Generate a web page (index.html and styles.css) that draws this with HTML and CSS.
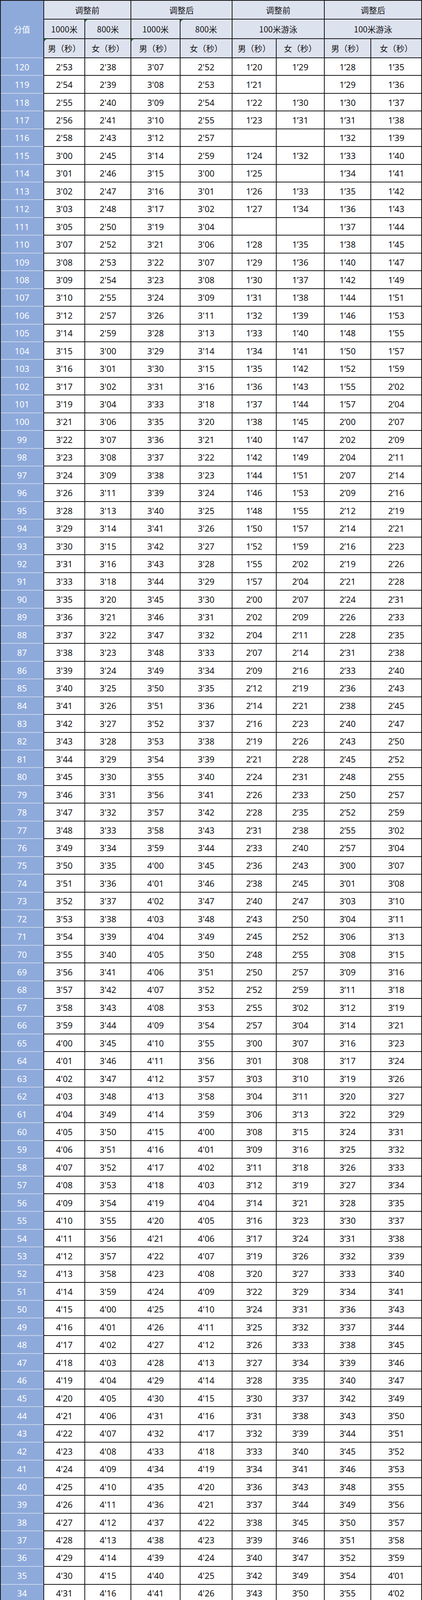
FILE: index.html
```html
<!DOCTYPE html>
<html lang="zh-CN">
<head>
<meta charset="utf-8">
<title>分值对照表</title>
<link rel="stylesheet" href="styles.css">
</head>
<body>
<div class="sheet">
<div class="corner">分值</div>
<div class="h s2">调整前</div><div class="h s2">调整后</div><div class="h s2">调整前</div><div class="h s2">调整后</div>
<div class="h">1000米</div><div class="h tri">800米</div><div class="h">1000米</div><div class="h tri">800米</div><div class="h s2">100米游泳</div><div class="h s2">100米游泳</div>
<div class="h tri">男（秒）</div><div class="h">女（秒）</div><div class="h tri">男（秒）</div><div class="h">女（秒）</div><div class="h">男（秒）</div><div class="h">女（秒）</div><div class="h">男（秒）</div><div class="h">女（秒）</div>
<div class="n">120</div><div>2'53</div><div>2'38</div><div>3'07</div><div>2'52</div><div>1’20</div><div>1’29</div><div>1’28</div><div>1’35</div>
<div class="n">119</div><div>2'54</div><div>2'39</div><div>3'08</div><div>2'53</div><div>1’21</div><div></div><div>1’29</div><div>1’36</div>
<div class="n">118</div><div>2'55</div><div>2'40</div><div>3'09</div><div>2'54</div><div>1’22</div><div>1’30</div><div>1’30</div><div>1’37</div>
<div class="n">117</div><div>2'56</div><div>2'41</div><div>3'10</div><div>2'55</div><div>1’23</div><div>1’31</div><div>1’31</div><div>1’38</div>
<div class="n">116</div><div>2'58</div><div>2'43</div><div>3'12</div><div>2'57</div><div></div><div></div><div>1’32</div><div>1’39</div>
<div class="n">115</div><div>3'00</div><div>2'45</div><div>3'14</div><div>2'59</div><div>1’24</div><div>1’32</div><div>1’33</div><div>1’40</div>
<div class="n">114</div><div>3'01</div><div>2'46</div><div>3'15</div><div>3'00</div><div>1’25</div><div></div><div>1’34</div><div>1’41</div>
<div class="n">113</div><div>3'02</div><div>2'47</div><div>3'16</div><div>3'01</div><div>1’26</div><div>1’33</div><div>1’35</div><div>1’42</div>
<div class="n">112</div><div>3'03</div><div>2'48</div><div>3'17</div><div>3'02</div><div>1’27</div><div>1’34</div><div>1’36</div><div>1’43</div>
<div class="n">111</div><div>3'05</div><div>2'50</div><div>3'19</div><div>3'04</div><div></div><div></div><div>1’37</div><div>1’44</div>
<div class="n">110</div><div>3'07</div><div>2'52</div><div>3'21</div><div>3'06</div><div>1’28</div><div>1’35</div><div>1’38</div><div>1’45</div>
<div class="n">109</div><div>3'08</div><div>2'53</div><div>3'22</div><div>3'07</div><div>1’29</div><div>1’36</div><div>1’40</div><div>1’47</div>
<div class="n">108</div><div>3'09</div><div>2'54</div><div>3'23</div><div>3'08</div><div>1’30</div><div>1’37</div><div>1’42</div><div>1’49</div>
<div class="n">107</div><div>3'10</div><div>2'55</div><div>3'24</div><div>3'09</div><div>1’31</div><div>1’38</div><div>1’44</div><div>1’51</div>
<div class="n">106</div><div>3'12</div><div>2'57</div><div>3'26</div><div>3'11</div><div>1’32</div><div>1’39</div><div>1’46</div><div>1’53</div>
<div class="n">105</div><div>3'14</div><div>2'59</div><div>3'28</div><div>3'13</div><div>1’33</div><div>1’40</div><div>1’48</div><div>1’55</div>
<div class="n">104</div><div>3'15</div><div>3'00</div><div>3'29</div><div>3'14</div><div>1’34</div><div>1’41</div><div>1’50</div><div>1’57</div>
<div class="n">103</div><div>3'16</div><div>3'01</div><div>3'30</div><div>3'15</div><div>1’35</div><div>1’42</div><div>1’52</div><div>1’59</div>
<div class="n">102</div><div>3'17</div><div>3'02</div><div>3'31</div><div>3'16</div><div>1’36</div><div>1’43</div><div>1’55</div><div>2’02</div>
<div class="n">101</div><div>3'19</div><div>3'04</div><div>3'33</div><div>3'18</div><div>1’37</div><div>1’44</div><div>1’57</div><div>2’04</div>
<div class="n">100</div><div>3'21</div><div>3'06</div><div>3'35</div><div>3'20</div><div>1’38</div><div>1’45</div><div>2’00</div><div>2’07</div>
<div class="n">99</div><div>3'22</div><div>3'07</div><div>3'36</div><div>3'21</div><div>1’40</div><div>1’47</div><div>2’02</div><div>2’09</div>
<div class="n">98</div><div>3'23</div><div>3'08</div><div>3'37</div><div>3'22</div><div>1’42</div><div>1’49</div><div>2’04</div><div>2’11</div>
<div class="n">97</div><div>3'24</div><div>3'09</div><div>3'38</div><div>3'23</div><div>1’44</div><div>1’51</div><div>2’07</div><div>2’14</div>
<div class="n">96</div><div>3'26</div><div>3'11</div><div>3'39</div><div>3'24</div><div>1’46</div><div>1’53</div><div>2’09</div><div>2’16</div>
<div class="n">95</div><div>3'28</div><div>3'13</div><div>3'40</div><div>3'25</div><div>1’48</div><div>1’55</div><div>2’12</div><div>2’19</div>
<div class="n">94</div><div>3'29</div><div>3'14</div><div>3'41</div><div>3'26</div><div>1’50</div><div>1’57</div><div>2’14</div><div>2’21</div>
<div class="n">93</div><div>3'30</div><div>3'15</div><div>3'42</div><div>3'27</div><div>1’52</div><div>1’59</div><div>2’16</div><div>2’23</div>
<div class="n">92</div><div>3'31</div><div>3'16</div><div>3'43</div><div>3'28</div><div>1’55</div><div>2’02</div><div>2’19</div><div>2’26</div>
<div class="n">91</div><div>3'33</div><div>3'18</div><div>3'44</div><div>3'29</div><div>1’57</div><div>2’04</div><div>2’21</div><div>2’28</div>
<div class="n">90</div><div>3'35</div><div>3'20</div><div>3'45</div><div>3'30</div><div>2’00</div><div>2’07</div><div>2’24</div><div>2’31</div>
<div class="n">89</div><div>3'36</div><div>3'21</div><div>3'46</div><div>3'31</div><div>2’02</div><div>2’09</div><div>2’26</div><div>2’33</div>
<div class="n">88</div><div>3'37</div><div>3'22</div><div>3'47</div><div>3'32</div><div>2’04</div><div>2’11</div><div>2’28</div><div>2’35</div>
<div class="n">87</div><div>3'38</div><div>3'23</div><div>3'48</div><div>3'33</div><div>2’07</div><div>2’14</div><div>2’31</div><div>2’38</div>
<div class="n">86</div><div>3'39</div><div>3'24</div><div>3'49</div><div>3'34</div><div>2’09</div><div>2’16</div><div>2’33</div><div>2’40</div>
<div class="n">85</div><div>3'40</div><div>3'25</div><div>3'50</div><div>3'35</div><div>2’12</div><div>2’19</div><div>2’36</div><div>2’43</div>
<div class="n">84</div><div>3'41</div><div>3'26</div><div>3'51</div><div>3'36</div><div>2’14</div><div>2’21</div><div>2’38</div><div>2’45</div>
<div class="n">83</div><div>3'42</div><div>3'27</div><div>3'52</div><div>3'37</div><div>2’16</div><div>2’23</div><div>2’40</div><div>2’47</div>
<div class="n">82</div><div>3'43</div><div>3'28</div><div>3'53</div><div>3'38</div><div>2’19</div><div>2’26</div><div>2’43</div><div>2’50</div>
<div class="n">81</div><div>3'44</div><div>3'29</div><div>3'54</div><div>3'39</div><div>2’21</div><div>2’28</div><div>2’45</div><div>2’52</div>
<div class="n">80</div><div>3'45</div><div>3'30</div><div>3'55</div><div>3'40</div><div>2’24</div><div>2’31</div><div>2’48</div><div>2’55</div>
<div class="n">79</div><div>3'46</div><div>3'31</div><div>3'56</div><div>3'41</div><div>2’26</div><div>2’33</div><div>2’50</div><div>2’57</div>
<div class="n">78</div><div>3'47</div><div>3'32</div><div>3'57</div><div>3'42</div><div>2’28</div><div>2’35</div><div>2’52</div><div>2’59</div>
<div class="n">77</div><div>3'48</div><div>3'33</div><div>3'58</div><div>3'43</div><div>2’31</div><div>2’38</div><div>2’55</div><div>3’02</div>
<div class="n">76</div><div>3'49</div><div>3'34</div><div>3'59</div><div>3'44</div><div>2’33</div><div>2’40</div><div>2’57</div><div>3’04</div>
<div class="n">75</div><div>3'50</div><div>3'35</div><div>4'00</div><div>3'45</div><div>2’36</div><div>2’43</div><div>3’00</div><div>3’07</div>
<div class="n">74</div><div>3'51</div><div>3'36</div><div>4'01</div><div>3'46</div><div>2’38</div><div>2’45</div><div>3’01</div><div>3’08</div>
<div class="n">73</div><div>3'52</div><div>3'37</div><div>4'02</div><div>3'47</div><div>2’40</div><div>2’47</div><div>3’03</div><div>3’10</div>
<div class="n">72</div><div>3'53</div><div>3'38</div><div>4'03</div><div>3'48</div><div>2’43</div><div>2’50</div><div>3’04</div><div>3’11</div>
<div class="n">71</div><div>3'54</div><div>3'39</div><div>4'04</div><div>3'49</div><div>2’45</div><div>2’52</div><div>3’06</div><div>3’13</div>
<div class="n">70</div><div>3'55</div><div>3'40</div><div>4'05</div><div>3'50</div><div>2’48</div><div>2’55</div><div>3’08</div><div>3’15</div>
<div class="n">69</div><div>3'56</div><div>3'41</div><div>4'06</div><div>3'51</div><div>2’50</div><div>2’57</div><div>3’09</div><div>3’16</div>
<div class="n">68</div><div>3'57</div><div>3'42</div><div>4'07</div><div>3'52</div><div>2’52</div><div>2’59</div><div>3’11</div><div>3’18</div>
<div class="n">67</div><div>3'58</div><div>3'43</div><div>4'08</div><div>3'53</div><div>2’55</div><div>3’02</div><div>3’12</div><div>3’19</div>
<div class="n">66</div><div>3'59</div><div>3'44</div><div>4'09</div><div>3'54</div><div>2’57</div><div>3’04</div><div>3’14</div><div>3’21</div>
<div class="n">65</div><div>4'00</div><div>3'45</div><div>4'10</div><div>3'55</div><div>3’00</div><div>3’07</div><div>3’16</div><div>3’23</div>
<div class="n">64</div><div>4'01</div><div>3'46</div><div>4'11</div><div>3'56</div><div>3’01</div><div>3’08</div><div>3’17</div><div>3’24</div>
<div class="n">63</div><div>4'02</div><div>3'47</div><div>4'12</div><div>3'57</div><div>3’03</div><div>3’10</div><div>3’19</div><div>3’26</div>
<div class="n">62</div><div>4'03</div><div>3'48</div><div>4'13</div><div>3'58</div><div>3’04</div><div>3’11</div><div>3’20</div><div>3’27</div>
<div class="n">61</div><div>4'04</div><div>3'49</div><div>4'14</div><div>3'59</div><div>3’06</div><div>3’13</div><div>3’22</div><div>3’29</div>
<div class="n">60</div><div>4'05</div><div>3'50</div><div>4'15</div><div>4'00</div><div>3’08</div><div>3’15</div><div>3’24</div><div>3’31</div>
<div class="n">59</div><div>4'06</div><div>3'51</div><div>4'16</div><div>4'01</div><div>3’09</div><div>3’16</div><div>3’25</div><div>3’32</div>
<div class="n">58</div><div>4'07</div><div>3'52</div><div>4'17</div><div>4'02</div><div>3’11</div><div>3’18</div><div>3’26</div><div>3’33</div>
<div class="n">57</div><div>4'08</div><div>3'53</div><div>4'18</div><div>4'03</div><div>3’12</div><div>3’19</div><div>3’27</div><div>3’34</div>
<div class="n">56</div><div>4'09</div><div>3'54</div><div>4'19</div><div>4'04</div><div>3’14</div><div>3’21</div><div>3’28</div><div>3’35</div>
<div class="n">55</div><div>4'10</div><div>3'55</div><div>4'20</div><div>4'05</div><div>3’16</div><div>3’23</div><div>3’30</div><div>3’37</div>
<div class="n">54</div><div>4'11</div><div>3'56</div><div>4'21</div><div>4'06</div><div>3’17</div><div>3’24</div><div>3’31</div><div>3’38</div>
<div class="n">53</div><div>4'12</div><div>3'57</div><div>4'22</div><div>4'07</div><div>3’19</div><div>3’26</div><div>3’32</div><div>3’39</div>
<div class="n">52</div><div>4'13</div><div>3'58</div><div>4'23</div><div>4'08</div><div>3’20</div><div>3’27</div><div>3’33</div><div>3’40</div>
<div class="n">51</div><div>4'14</div><div>3'59</div><div>4'24</div><div>4'09</div><div>3’22</div><div>3’29</div><div>3’34</div><div>3’41</div>
<div class="n">50</div><div>4'15</div><div>4'00</div><div>4'25</div><div>4'10</div><div>3’24</div><div>3’31</div><div>3’36</div><div>3’43</div>
<div class="n">49</div><div>4'16</div><div>4'01</div><div>4'26</div><div>4'11</div><div>3’25</div><div>3’32</div><div>3’37</div><div>3’44</div>
<div class="n">48</div><div>4'17</div><div>4'02</div><div>4'27</div><div>4'12</div><div>3’26</div><div>3’33</div><div>3’38</div><div>3’45</div>
<div class="n">47</div><div>4'18</div><div>4'03</div><div>4'28</div><div>4'13</div><div>3’27</div><div>3’34</div><div>3’39</div><div>3’46</div>
<div class="n">46</div><div>4'19</div><div>4'04</div><div>4'29</div><div>4'14</div><div>3’28</div><div>3’35</div><div>3’40</div><div>3’47</div>
<div class="n">45</div><div>4'20</div><div>4'05</div><div>4'30</div><div>4'15</div><div>3’30</div><div>3’37</div><div>3’42</div><div>3’49</div>
<div class="n">44</div><div>4'21</div><div>4'06</div><div>4'31</div><div>4'16</div><div>3’31</div><div>3’38</div><div>3’43</div><div>3’50</div>
<div class="n">43</div><div>4'22</div><div>4'07</div><div>4'32</div><div>4'17</div><div>3’32</div><div>3’39</div><div>3’44</div><div>3’51</div>
<div class="n">42</div><div>4'23</div><div>4'08</div><div>4'33</div><div>4'18</div><div>3’33</div><div>3’40</div><div>3’45</div><div>3’52</div>
<div class="n">41</div><div>4'24</div><div>4'09</div><div>4'34</div><div>4'19</div><div>3’34</div><div>3’41</div><div>3’46</div><div>3’53</div>
<div class="n">40</div><div>4'25</div><div>4'10</div><div>4'35</div><div>4'20</div><div>3’36</div><div>3’43</div><div>3’48</div><div>3’55</div>
<div class="n">39</div><div>4'26</div><div>4'11</div><div>4'36</div><div>4'21</div><div>3’37</div><div>3’44</div><div>3’49</div><div>3’56</div>
<div class="n">38</div><div>4'27</div><div>4'12</div><div>4'37</div><div>4'22</div><div>3’38</div><div>3’45</div><div>3’50</div><div>3’57</div>
<div class="n">37</div><div>4'28</div><div>4'13</div><div>4'38</div><div>4'23</div><div>3’39</div><div>3’46</div><div>3’51</div><div>3’58</div>
<div class="n">36</div><div>4'29</div><div>4'14</div><div>4'39</div><div>4'24</div><div>3’40</div><div>3’47</div><div>3’52</div><div>3’59</div>
<div class="n">35</div><div>4'30</div><div>4'15</div><div>4'40</div><div>4'25</div><div>3’42</div><div>3’49</div><div>3’54</div><div>4’01</div>
<div class="n">34</div><div>4'31</div><div>4'16</div><div>4'41</div><div>4'26</div><div>3’43</div><div>3’50</div><div>3’55</div><div>4’02</div>
<div class="n">33</div><div>4'32</div><div>4'17</div><div>4'42</div><div>4'27</div><div>3’44</div><div>3’51</div><div>3’56</div><div>4’03</div>
<div class="n">32</div><div>4'33</div><div>4'18</div><div>4'43</div><div>4'28</div><div>3’45</div><div>3’52</div><div>3’57</div><div>4’04</div>
<div class="n">31</div><div>4'34</div><div>4'19</div><div>4'44</div><div>4'29</div><div>3’46</div><div>3’53</div><div>3’58</div><div>4’05</div>
<div class="n">30</div><div>4'35</div><div>4'20</div><div>4'45</div><div>4'30</div><div>3’48</div><div>3’55</div><div>4’00</div><div>4’07</div>
<div class="n">29</div><div>4'36</div><div>4'21</div><div>4'46</div><div>4'31</div><div>3’49</div><div>3’56</div><div>4’01</div><div>4’08</div>
<div class="n">28</div><div>4'37</div><div>4'22</div><div>4'47</div><div>4'32</div><div>3’50</div><div>3’57</div><div>4’02</div><div>4’09</div>
<div class="n">27</div><div>4'38</div><div>4'23</div><div>4'48</div><div>4'33</div><div>3’51</div><div>3’58</div><div>4’03</div><div>4’10</div>
<div class="n">26</div><div>4'39</div><div>4'24</div><div>4'49</div><div>4'34</div><div>3’52</div><div>3’59</div><div>4’04</div><div>4’11</div>
<div class="n">25</div><div>4'40</div><div>4'25</div><div>4'50</div><div>4'35</div><div>3’54</div><div>4’01</div><div>4’05</div><div>4’12</div>
<div class="n">24</div><div>4'41</div><div>4'26</div><div>4'51</div><div>4'36</div><div>3’55</div><div>4’02</div><div>4’06</div><div>4’13</div>
<div class="n">23</div><div>4'42</div><div>4'27</div><div>4'52</div><div>4'37</div><div>3’56</div><div>4’03</div><div>4’07</div><div>4’14</div>
<div class="n">22</div><div>4'43</div><div>4'28</div><div>4'53</div><div>4'38</div><div>3’57</div><div>4’04</div><div>4’08</div><div>4’15</div>
<div class="n">21</div><div>4'44</div><div>4'29</div><div>4'54</div><div>4'39</div><div>3’58</div><div>4’05</div><div>4’09</div><div>4’16</div>
<div class="n">20</div><div>4'45</div><div>4'30</div><div>4'55</div><div>4'40</div><div>4’00</div><div>4’07</div><div>4’10</div><div>4’17</div>
<div class="n">19</div><div>4'46</div><div>4'31</div><div>4'56</div><div>4'41</div><div>4’01</div><div>4’08</div><div>4’11</div><div>4’18</div>
<div class="n">18</div><div>4'47</div><div>4'32</div><div>4'57</div><div>4'42</div><div>4’02</div><div>4’09</div><div>4’12</div><div>4’19</div>
<div class="n">17</div><div>4'48</div><div>4'33</div><div>4'58</div><div>4'43</div><div>4’03</div><div>4’10</div><div>4’13</div><div>4’20</div>
<div class="n">16</div><div>4'49</div><div>4'34</div><div>4'59</div><div>4'44</div><div>4’04</div><div>4’11</div><div>4’14</div><div>4’21</div>
<div class="n">15</div><div>4'50</div><div>4'35</div><div>5'00</div><div>4'45</div><div>4’05</div><div>4’12</div><div>4’15</div><div>4’22</div>
<div class="n">14</div><div>4'51</div><div>4'36</div><div>5'01</div><div>4'46</div><div>4’06</div><div>4’13</div><div>4’16</div><div>4’23</div>
<div class="n">13</div><div>4'52</div><div>4'37</div><div>5'02</div><div>4'47</div><div>4’07</div><div>4’14</div><div>4’17</div><div>4’24</div>
<div class="n">12</div><div>4'53</div><div>4'38</div><div>5'03</div><div>4'48</div><div>4’08</div><div>4’15</div><div>4’18</div><div>4’25</div>
<div class="n">11</div><div>4'54</div><div>4'39</div><div>5'04</div><div>4'49</div><div>4’09</div><div>4’16</div><div>4’19</div><div>4’26</div>
<div class="n">10</div><div>4'55</div><div>4'40</div><div>5'05</div><div>4'50</div><div>4’10</div><div>4’17</div><div>4’20</div><div>4’27</div>
<div class="n">9</div><div>4'56</div><div>4'41</div><div>5'06</div><div>4'51</div><div>4’11</div><div>4’18</div><div>4’21</div><div>4’28</div>
<div class="n">8</div><div>4'57</div><div>4'42</div><div>5'07</div><div>4'52</div><div>4’12</div><div>4’19</div><div>4’22</div><div>4’29</div>
<div class="n">7</div><div>4'58</div><div>4'43</div><div>5'08</div><div>4'53</div><div>4’13</div><div>4’20</div><div>4’23</div><div>4’30</div>
<div class="n">6</div><div>4'59</div><div>4'44</div><div>5'09</div><div>4'54</div><div>4’14</div><div>4’21</div><div>4’24</div><div>4’31</div>
<div class="n">5</div><div>5'00</div><div>4'45</div><div>5'10</div><div>4'55</div><div>4’15</div><div>4’22</div><div>4’25</div><div>4’32</div>
<div class="n">4</div><div>5'01</div><div>4'46</div><div>5'11</div><div>4'56</div><div>4’16</div><div>4’23</div><div>4’26</div><div>4’33</div>
<div class="n">3</div><div>5'02</div><div>4'47</div><div>5'12</div><div>4'57</div><div>4’17</div><div>4’24</div><div>4’27</div><div>4’34</div>
<div class="n">2</div><div>5'03</div><div>4'48</div><div>5'13</div><div>4'58</div><div>4’18</div><div>4’25</div><div>4’28</div><div>4’35</div>
<div class="n">1</div><div>5'04</div><div>4'49</div><div>5'14</div><div>4'59</div><div>4’19</div><div>4’26</div><div>4’29</div><div>4’36</div>
<div class="n">0</div><div>5'05</div><div>4'50</div><div>5'15</div><div>4'60</div><div>4’20</div><div>4’27</div><div>4’30</div><div>4’37</div>
</div>
</body>
</html>
```

FILE: styles.css
```css
html, body {
  margin: 0;
  padding: 0;
  background: #ffffff;
}

body {
  font-family: "Noto Sans", "Noto Sans CJK SC", sans-serif;
}

.sheet {
  display: grid;
  grid-template-columns: 108.7px 103.8px 115.5px 124px 131px 111px 121px 117px 128px;
  grid-template-rows: 46.4px 47.3px 47.3px;
  grid-auto-rows: 43.45px;
  gap: 2px;
  padding: 2px;
  width: max-content;
  background: #161616;
}

.sheet > div {
  position: relative;
  display: flex;
  align-items: center;
  justify-content: center;
  background: #ffffff;
  color: #141414;
  font-size: 22px;
  line-height: 1;
  white-space: nowrap;
}

.sheet > .h {
  background: #dde2ef;
  font-family: "Noto Sans CJK SC", sans-serif;
  font-size: 21px;
  color: #161616;
}

.sheet > .corner {
  grid-row: span 3;
  background: #8eaadb;
  color: #ffffff;
  font-family: "Noto Sans CJK SC", sans-serif;
  font-size: 21px;
  box-shadow: 0 2px 0 #c7d3eb;
}

.sheet > .n {
  background: #8eaadb;
  color: #ffffff;
  box-shadow: 0 2px 0 #c7d3eb;
}

.sheet > .s2 {
  grid-column: span 2;
}

.sheet > .tri::before {
  content: "";
  position: absolute;
  left: 0;
  top: 0;
  border-top: 6px solid #2f8a3c;
  border-right: 6px solid transparent;
}
```
